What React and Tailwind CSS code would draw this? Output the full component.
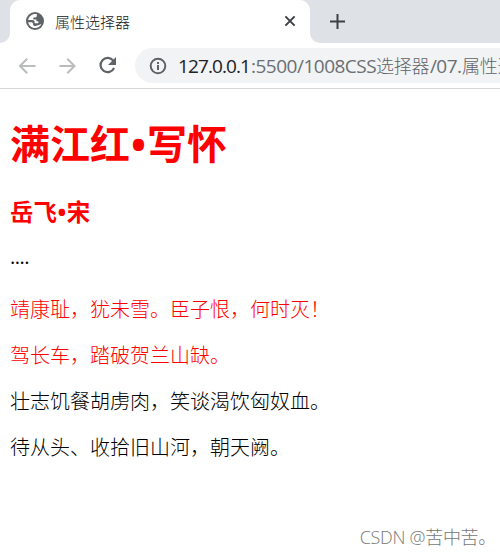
function GlobeIcon() {
  return (
    <svg className="mb-px size-[18px] shrink-0" viewBox="0 0 18 18">
      <circle cx="9" cy="9" r="9" fill="#5f6368" />
      <path
        fill="#fff"
        d="M10.8 2.1C6.9 1.2 2.9 3.7 2.1 8h4.3c1.4 0 2.2.7 2.2 1.9v1.4h2.9c.6 0 1-.4 1-1s-.4-1-1-1h-1.1V7.6H8.2c-.5 0-.9-.4-.9-.9V5.4h1.8c.9 0 1.7-.7 1.7-1.6V2.1z"
      />
      <path
        fill="#fff"
        d="M2.2 10.2C2.8 13.4 5.6 16 9 16c2.8 0 5.2-1.7 6.3-4.1-1.5.3-2.2 1.3-3.6 1.3-1 0-1.5.9-2.5.9-1.4 0-2.2-1-2.2-2.2 0-1.1-.7-1.7-1.7-1.700H2.2z"
      />
    </svg>
  );
}

function TabStrip() {
  return (
    <div className="flex h-[43px] bg-[#dee1e6]">
      <div className="flex w-[10px] shrink-0 items-end bg-gradient-to-t from-white from-50% to-[#dee1e6] to-50%">
        <div className="h-full w-full rounded-br-[10px] bg-[#dee1e6]" />
      </div>
      <div className="flex h-full w-[300px] shrink-0 items-center rounded-t-[10px] bg-white pl-[16px] pr-[12px]">
        <GlobeIcon />
        <span className="ml-[11px] flex-1 whitespace-nowrap text-[15px] font-light leading-5 text-[#202124]">属性选择器</span>
        <svg className="mb-px size-4" viewBox="0 0 16 16" fill="none" stroke="#3c4043" strokeWidth="2">
          <path d="M3.4 3.4l9.2 9.2M12.6 3.4l-9.2 9.2" />
        </svg>
      </div>
      <div className="flex flex-1 bg-gradient-to-t from-white from-50% to-[#dee1e6] to-50%">
        <div className="flex flex-1 items-center rounded-bl-[10px] bg-[#dee1e6] pl-[19px]">
          <svg className="mb-[2px] size-4" viewBox="0 0 16 16" fill="none" stroke="#3c4043" strokeWidth="2">
            <path d="M8.5 1v15M1 8.5h15" />
          </svg>
        </div>
      </div>
    </div>
  );
}

function Arrow({ d }) {
  return (
    <svg className="size-[24px] shrink-0" viewBox="0 0 24 24" fill="none" stroke="#babcbe" strokeWidth="2">
      <path d={d} />
    </svg>
  );
}

function RefreshIcon() {
  return (
    <svg className="ml-[16px] size-[25px] shrink-0" viewBox="0 0 25 25" fill="none">
      <path d="M18.3 7.7A7.1 7.1 0 1 0 19.1 15" stroke="#5f6368" strokeWidth="2.2" />
      <path d="M21 4v8h-8z" fill="#5f6368" />
    </svg>
  );
}

function InfoIcon() {
  return (
    <svg className="size-[18px] shrink-0" viewBox="0 0 18 18" fill="none" stroke="#5f6368" strokeWidth="2">
      <circle cx="9" cy="9" r="7.3" />
      <path d="M9 8v5M9 5v2" />
    </svg>
  );
}

function Toolbar() {
  return (
    <div className="flex h-[46px] items-center border-b border-[#d5d7da] bg-white pl-[15px]">
      <Arrow d="M20.5 12H5.5M12.2 4.8L5 12l7.2 7.2" />
      <div className="ml-[16px] flex">
        <Arrow d="M4.5 12H19M12.3 4.8l7.2 7.2-7.2 7.2" />
      </div>
      <RefreshIcon />
      <div className="ml-[15px] flex h-[35px] min-w-0 flex-1 items-center overflow-hidden rounded-l-full bg-[#f1f3f4] pl-[14px]">
        <InfoIcon />
        <div className="ml-[11px] flex items-center whitespace-nowrap text-[18px] font-light leading-6 text-[#5f6368]">
          <span className="w-[73px] shrink-0 text-[19px] font-normal tracking-[-0.9px] text-[#202124]">127.0.0.1</span>
          <span className="w-[125px] shrink-0 text-[19px] font-normal tracking-[-0.5px] text-[#6b6e72]">:5500/1008CSS</span>
          <span className="w-[54px] shrink-0 tracking-[-0.3px]">选择器</span>
          <span className="w-[32px] shrink-0 text-[19px] font-normal tracking-[-0.6px] text-[#6b6e72]">/07.</span>
          <span className="shrink-0 tracking-[-0.3px]">属性选择器</span>
        </div>
      </div>
    </div>
  );
}

export default function App() {
  return (
    <div className="flex h-[555px] w-[500px] flex-col overflow-hidden bg-white font-['Open_Sans','Noto_Sans_CJK_SC',sans-serif]">
      <TabStrip />
      <Toolbar />
      <main className="flex flex-1 flex-col pl-[10px] text-[20px] font-light leading-[26px] text-black">
        <h1 className="mt-[29px] flex h-[52px] items-center text-[40px] font-bold leading-[52px] text-[#ff0000]">
          <span>满江红</span><span className="w-[17px] text-center">•</span><span>写怀</span>
        </h1>
        <h3 className="mt-[26px] flex h-[32px] items-center text-[23.4px] font-bold leading-8 text-[#ff0000]">
          <span>岳飞</span><span className="w-[10px] text-center">•</span><span>宋</span>
        </h3>
        <p className="mt-[16px] font-normal tracking-[-0.5px]">....</p>
        <p className="mt-[27px] text-[#ff0000]">靖康耻，犹未雪。臣子恨，何时灭！</p>
        <p className="mt-[20px] text-[#ff0000]">驾长车，踏破贺兰山缺。</p>
        <p className="mt-[20px]">壮志饥餐胡虏肉，笑谈渴饮匈奴血。</p>
        <p className="mt-[20px]">待从头、收拾旧山河，朝天阙。</p>
        <div className="mb-[5px] mr-[4px] mt-auto self-end whitespace-nowrap text-[18px] tracking-[-0.3px] text-[#777777]">
          CSDN @苦中苦。
        </div>
      </main>
    </div>
  );
}
